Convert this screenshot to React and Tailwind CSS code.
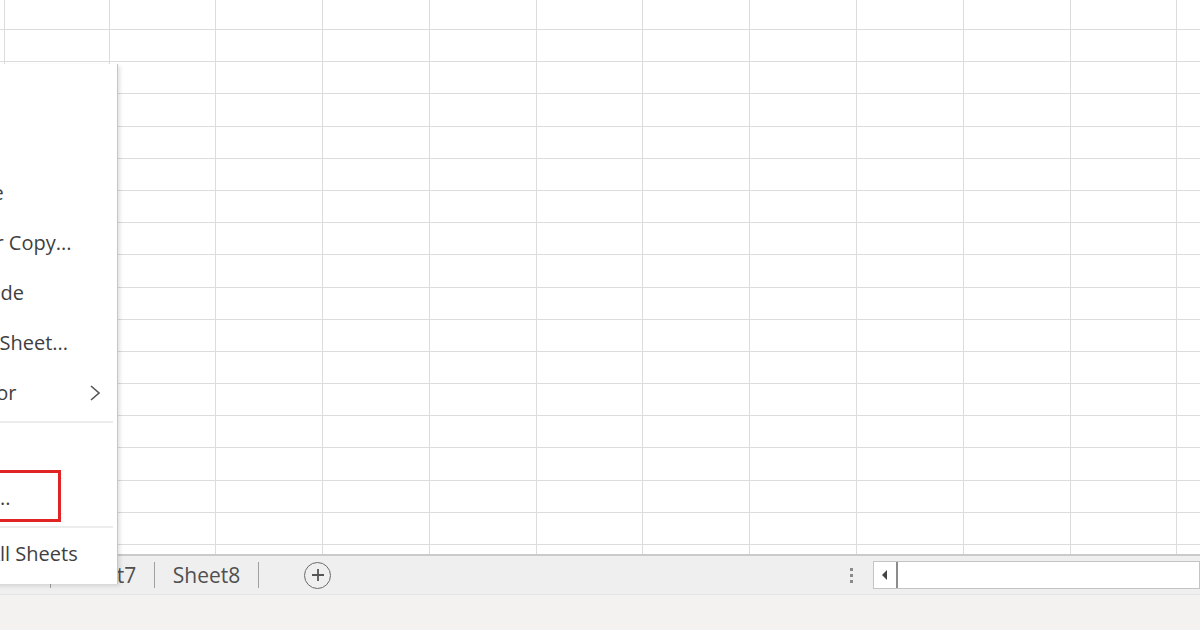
import React from 'react';

const font = { fontFamily: '"Open Sans", "Noto Sans", sans-serif' };

const ROWS = 18;
const COLS = 13;

const MenuItem = ({ label, submenu = false, boxed = false, h = 'h-[50px]' }) => (
  <div className={`relative flex ${h} items-center pl-[47px] pr-[16px]`}>
    <span className="text-[20px] leading-none text-[#3f3f3f]">{label}</span>
    {submenu && (
      <svg className="ml-auto" width="12" height="18" viewBox="0 0 12 18">
        <polyline points="2,2 10,9 2,16" fill="none" stroke="#555" strokeWidth="1.6" />
      </svg>
    )}
    {boxed && (
      <div className="pointer-events-none absolute bottom-[1px] left-0 right-[56px] top-[-3px] border-[3px] border-[#e02424]" />
    )}
  </div>
);

const Separator = () => (
  <div className="flex h-[8px] items-center pr-[4px]">
    <div className="h-[2px] w-full bg-[#ececec]" />
  </div>
);

const Tab = ({ name }) => (
  <div className="flex h-full w-[103px] items-center justify-center">
    <span className="text-[21px] leading-none text-[#505050]">{name}</span>
  </div>
);

const TabDivider = () => <div className="h-[26px] w-[1px] bg-[#a0a0a0]" />;

export default function App() {
  const cells = [];
  for (let r = 0; r < ROWS; r++) {
    for (let c = 0; c < COLS; c++) {
      cells.push(<div key={`${r}-${c}`} className="border-b border-r border-[#dcdcdc]" />);
    }
  }

  return (
    <div className="relative flex h-[630px] w-[1200px] flex-col overflow-hidden bg-white" style={font}>
      {/* sheet grid */}
      <div className="h-[554px] overflow-hidden">
        <div className="grid grid-cols-[5px_104.5px_repeat(11,106.8px)] grid-rows-[30px_repeat(17,32.2px)]">
          {cells}
        </div>
      </div>

      {/* sheet tabs */}
      <div className="flex h-[40px] items-center border-t-2 border-[#cacaca] bg-[#efefef]">
        <div className="ml-[-53px] flex h-full items-center">
          <Tab name="Sheet6" />
          <TabDivider />
          <Tab name="Sheet7" />
          <TabDivider />
          <Tab name="Sheet8" />
          <TabDivider />
        </div>
        <button className="ml-[45px] flex h-[27px] w-[27px] items-center justify-center rounded-full border-[1.5px] border-[#6a6a6a]">
          <svg width="14" height="14" viewBox="0 0 14 14">
            <path d="M7 1v12M1 7h12" stroke="#555" strokeWidth="1.8" />
          </svg>
        </button>
        <div className="ml-auto flex items-center">
          <div className="flex flex-col gap-[3px]">
            <span className="h-[3px] w-[3px] bg-[#8a8a8a]" />
            <span className="h-[3px] w-[3px] bg-[#8a8a8a]" />
            <span className="h-[3px] w-[3px] bg-[#8a8a8a]" />
          </div>
          <div className="ml-[20px] flex h-[28px] w-[327px] items-stretch border border-[#c4c4c4] bg-white">
            <div className="flex w-[24px] items-center justify-center border-r-2 border-[#8c8c8c]">
              <svg width="8" height="10" viewBox="0 0 8 10">
                <path d="M6 0v10L1 5z" fill="#444" />
              </svg>
            </div>
            <div className="flex-1" />
          </div>
        </div>
      </div>

      {/* status bar */}
      <div className="flex-1 border-t border-[#e4e4e4] bg-[#f3f2f1]" />

      {/* sheet tab context menu */}
      <div className="absolute left-[-120px] top-[64px] w-[238px] border-r border-[#c6c6c6] bg-white pt-[4px] pb-[7px] shadow-[2px_2px_4px_rgba(0,0,0,0.12)]">
        <MenuItem label="Insert..." />
        <MenuItem label="Delete" />
        <MenuItem label="Rename" />
        <MenuItem label="Move or Copy..." />
        <MenuItem label="View Code" />
        <MenuItem label="Protect Sheet..." />
        <MenuItem label="Tab Color" submenu />
        <Separator />
        <MenuItem label="Hide" h="h-[47px]" />
        <MenuItem label="Unhide..." boxed />
        <Separator />
        <MenuItem label="Select All Sheets" h="h-[46px]" />
      </div>
    </div>
  );
}
